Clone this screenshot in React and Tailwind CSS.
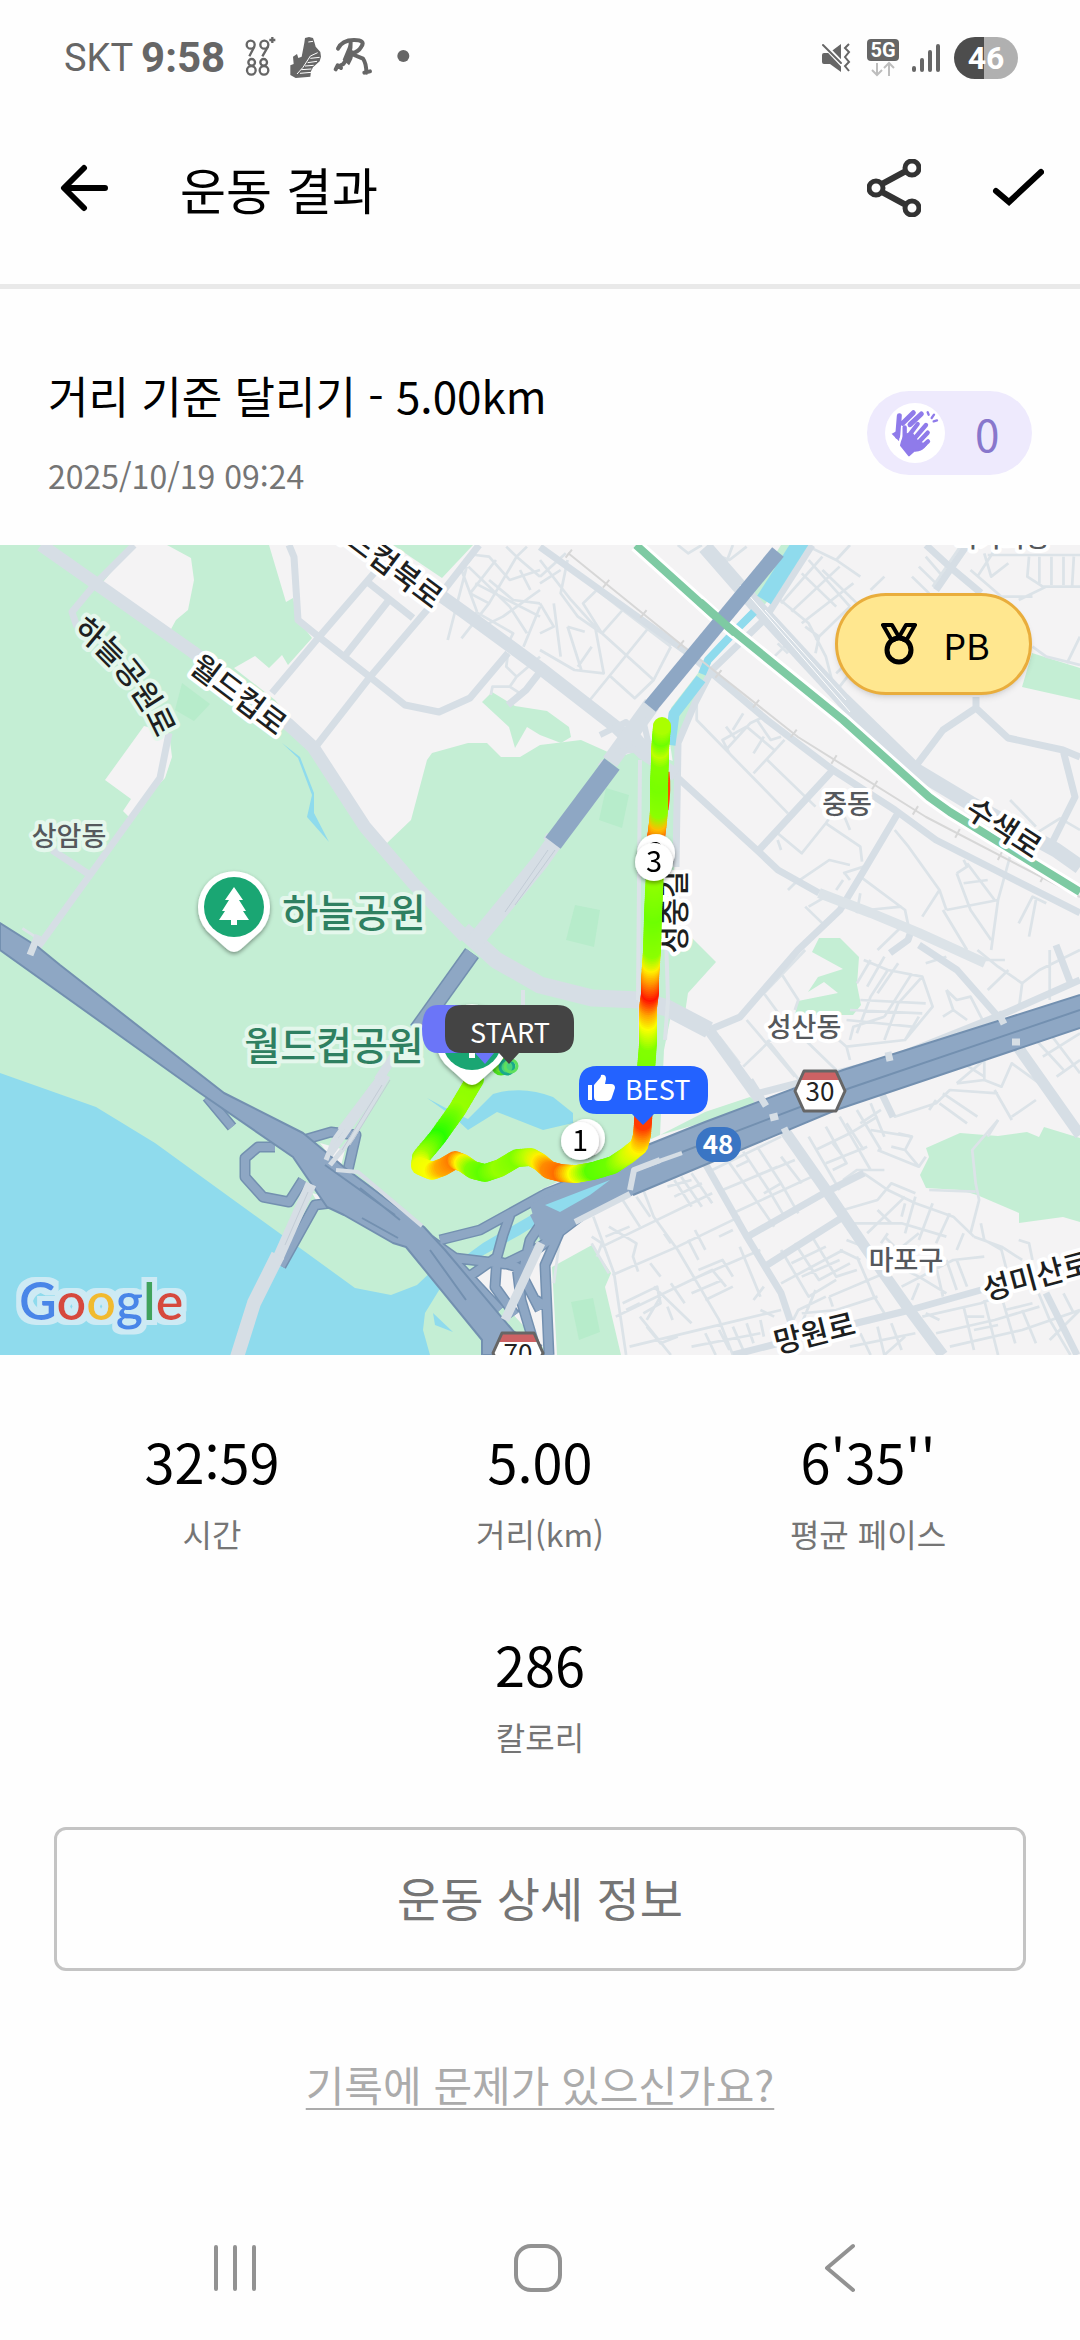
import React from 'react';

const RECORD = {
    title: '거리 기준 달리기 - 5.00km',
    date: '2025/10/19 09:24',
    claps: 0,
    stats: [
        { value: '32:59', label: '시간' },
        { value: '5.00', label: '거리(km)' },
        { value: "6'35''", label: '평균 페이스' },
        { value: '286', label: '칼로리' },
    ],
};

// Route points: x, y, colour of the pace at that point
const ROUTE = [
    [476, 1078, [110, 255, 0]], [470, 1088, [140, 255, 0]], [457, 1110, [150, 255, 0]], [437, 1138, [40, 255, 0]],
    [421, 1157, [160, 255, 0]], [420, 1166, [235, 255, 0]], [432, 1171, [250, 255, 0]], [443, 1167, [255, 170, 0]],
    [455, 1160, [255, 125, 0]], [463, 1163, [255, 245, 0]], [473, 1170, [125, 255, 0]], [485, 1173, [95, 255, 0]],
    [500, 1168, [150, 255, 0]], [517, 1158, [125, 255, 0]], [531, 1157, [190, 255, 0]], [540, 1162, [255, 240, 0]],
    [549, 1170, [255, 140, 0]], [561, 1173, [255, 110, 0]], [576, 1174, [250, 255, 0]], [593, 1171, [90, 255, 0]],
    [613, 1165, [110, 255, 0]], [628, 1155, [200, 255, 0]], [639, 1146, [255, 245, 0]], [642, 1135, [255, 170, 0]],
    [643, 1122, [255, 60, 0]], [644, 1105, [255, 60, 0]], [646, 1070, [120, 255, 0]], [648, 1043, [130, 255, 0]],
    [648, 1022, [250, 255, 0]], [648, 1008, [255, 165, 0]], [650, 993, [255, 20, 0]], [650, 980, [255, 120, 0]],
    [651, 964, [255, 240, 0]], [652, 950, [140, 255, 0]], [653, 915, [110, 255, 0]], [655, 870, [150, 255, 0]],
    [656, 838, [255, 80, 0]], [658, 822, [255, 190, 0]], [659, 810, [140, 255, 0]], [659, 785, [120, 255, 0]],
    [660, 760, [130, 255, 0]], [660, 750, [190, 255, 0]], [661, 738, [110, 255, 0]], [662, 726, [170, 255, 0]],
];

// Splits every leg of the route into dots two units apart
const routeDots = ROUTE.slice(1).flatMap(([x, y, c], i) => {
    const [px, py, pc] = ROUTE[i];
    const steps = Math.ceil(Math.hypot(x - px, y - py) / 2);
    return Array.from({ length: steps }, (_, s) => {
        const t = (s + 1) / steps;
        const mix = (a, b) => Math.round(a + (b - a) * t);
        return { x: px + (x - px) * t, y: py + (y - py) * t, fill: `rgb(${mix(pc[0], c[0])},${mix(pc[1], c[1])},${mix(pc[2], c[2])})` };
    });
});

// --- STATUS BAR ---
const StatusBar = () => (
    <div className="flex h-[100px] items-center justify-between pt-4 pr-[62px] pl-[64px] text-[#666666]">
        <div className="flex items-center gap-2 font-[Roboto] leading-none">
            <span className="text-[38px]">SKT</span>
            <span className="text-[42px] font-bold">9:58</span>
            <svg viewBox="20 0 540 180" className="ml-2 h-[60px] w-[180px]" fill="none" stroke="currentColor">
                <g strokeWidth="7">
                    <circle cx="49" cy="50" r="12" />
                    <circle cx="90" cy="50" r="12" />
                    <path d="M60 56 45 85M101 56 84 85M105 36h18M114 27v18" />
                    <circle cx="52" cy="103" r="10" />
                    <circle cx="88" cy="103" r="10" />
                    <circle cx="51" cy="127" r="13" />
                    <circle cx="89" cy="127" r="13" />
                </g>
                <path d="M168 141V112l10-4-2-22 12-8 4 12 10-4 8-42 2-14 12-3 12 3 4 12 4 14 14 16 2 14-4 14-20 18-6 12-2 16-44 4z" fill="currentColor" stroke="none" />
                <path d="M250 74l-22 10-22 34-18 20M222 42l14-2M256 88l-28 3M248 100l-28 4M238 112l-26 2M231 123l-30 2M231 133l-34 3" stroke="#fff" strokeWidth="3" />
                <path d="M311 62q12-26 48-26t22 20q-9 16-28 19M349 42q2 34-22 66l-19 10M352 78l34 14q10 14 10 42M304 124l6-12 10 8M390 134l17-4" strokeWidth="12" strokeLinejoin="round" strokeLinecap="round" />
                <path d="M345 60q14 18-2 44l-12-10z" fill="currentColor" strokeWidth="10" />
                <circle cx="507" cy="84" r="18" fill="currentColor" stroke="none" />
            </svg>
        </div>
        <div className="flex items-center">
            <svg viewBox="0 0 30 30" className="mr-4 h-[30px] w-[30px]">
                <path d="M1 12q0-2 2-2h5l12-9v28l-11-8H3q-2 0-2-2z" fill="currentColor" />
                <path d="M0-1 24 24" stroke="#fff" strokeWidth="5" />
                <path d="M2 2 20 20" stroke="currentColor" strokeWidth="2" strokeLinecap="round" />
                <path d="M28 1l-4 4 4 4-4 5 4 5-4 4 4 5" fill="none" stroke="currentColor" strokeWidth="2" />
            </svg>
            <svg viewBox="0 0 32 38" className="mr-[13px] h-[38px] w-[32px]">
                <rect width="32" height="22" rx="4" fill="currentColor" />
                <text x="16" y="18" textAnchor="middle" className="fill-white font-[Roboto] text-[20px] font-bold">5G</text>
                <path d="M10 24v12M5 31l5 5 5-5M22 37V24M17 29l5-5 5 5" fill="none" stroke="#bdbdbd" strokeWidth="2" />
            </svg>
            <svg viewBox="0 0 28 30" className="mr-[14px] h-[30px] w-[28px]" stroke="currentColor" strokeWidth="4" strokeLinecap="round">
                <path d="M2 25v2M10 17v10M18 9v18M26 3v24" />
            </svg>
            <span className="flex h-[42px] w-[64px] items-center justify-center rounded-full bg-linear-to-r from-[#4d4d4d] from-[47%] to-[#b0b0b0] to-[47%] font-[Roboto] text-[32px] leading-none font-bold text-white">46</span>
        </div>
    </div>
);

// --- HEADER ---
const Header = () => (
    <header className="flex h-[189px] items-center border-b-[5px] border-[#e9e9e9] pr-[36px] pb-2 pl-[60px]">
        <button aria-label="뒤로">
            <svg viewBox="0 0 48 48" className="size-[48px]" fill="none" stroke="#000" strokeWidth="6" strokeLinecap="round" strokeLinejoin="round">
                <path d="M45 24H5M24 4 4 24l20 20" />
            </svg>
        </button>
        <h1 className="ml-[72px] flex-1 text-[50px] leading-[72px]">운동 결과</h1>
        <button aria-label="공유">
            <svg viewBox="0 0 54 58" className="h-[58px] w-[54px]" fill="none" stroke="#333" strokeWidth="5">
                <circle cx="9" cy="29" r="7" />
                <circle cx="45" cy="9" r="7" />
                <circle cx="45" cy="49" r="7" />
                <path d="M15 25 39 12M15 33l24 13" strokeWidth="6" />
            </svg>
        </button>
        <button aria-label="완료" className="ml-[71px]">
            <svg viewBox="0 0 52 40" className="h-[40px] w-[52px]" fill="none" stroke="#000" strokeWidth="6" strokeLinecap="round">
                <path d="M4 23 17 34 49 4" />
            </svg>
        </button>
    </header>
);

const ClapIcon = () => (
    <svg viewBox="255 125 180 180" className="size-[60px]" stroke="#8f7bea" fill="none" strokeLinecap="round">
        <path d="M298 163l-5 62M340 154l-32 32M364 158l-34 32" strokeWidth="15" />
        <path d="M278 218l18-10v28z" fill="#8f7bea" strokeWidth="4" />
        <path d="M314 196l-14 48 27 38 24-14q28-6 36-30l-44-24-28-8z" fill="#fff" stroke="#fff" strokeWidth="8" />
        <path d="M314 198v42M353 188l-26 34M378 191l-36 42M383 214l-32 34M384 240l-22 20" strokeWidth="13" />
        <path d="M306 240l8-20 22-4 18 26 24 8q-14 20-36 18l-15 14-24-30z" fill="#8f7bea" strokeWidth="6" strokeLinejoin="round" />
        <path d="M383 153l3 7M402 160l-7 10M401 180l10-3" strokeWidth="7" />
    </svg>
);

// --- MAP ---
const MapLabel = ({ x, y, angle = 0, className = 'fill-[#1d1f21] text-[30px]', halo = '#ffffff', children }) => (
    <text
        transform={`translate(${x} ${y}) rotate(${angle})`}
        textAnchor="middle"
        dominantBaseline="central"
        stroke={halo}
        strokeWidth="8"
        strokeLinejoin="round"
        paintOrder="stroke"
        className={`font-medium ${className}`}
    >
        {children}
    </text>
);

const ParkPin = ({ x, y }) => (
    <g transform={`translate(${x} ${y})`}>
        <path d="M-27 24A36 36 0 1 1 27 24L7 42Q0 48-7 42Z" fill="#fff" filter="url(#pinShadow)" />
        <circle r="30" fill="#1aa673" />
        <path d="M0-20l9 13H5l7 11H9l6 9H3v5h-6v-5h-12l6-9h-3l7-11h-4z" fill="#fff" />
    </g>
);

const KmMarker = ({ x, y, children }) => (
    <g filter="url(#pinShadow)">
        <circle cx={x} cy={y} r="19" fill="#fff" />
        <text x={x} y={y + 10} textAnchor="middle" className="fill-black text-[29px]">{children}</text>
    </g>
);

const RoadShield = ({ x, y, children }) => (
    <g transform={`translate(${x} ${y})`}>
        <path d="M-16-20h32l9 20-9 20h-32l-9-20z" fill="#fff" />
        <path d="M-16-20h32l4 9h-40z" fill="#cd6264" />
        <path d="M-16-20h32l9 20-9 20h-32l-9-20z" fill="none" stroke="#666" strokeWidth="3" strokeLinejoin="round" />
        <text y="10" textAnchor="middle" className="fill-[#222] text-[26px]">{children}</text>
    </g>
);

const MapLand = () => (
    <g>
        <rect y="545" width="1080" height="810" fill="#f4f3f4" />
        <g fill="#c4eed4">
            <path d="M0 545H269L286 602 293 598 298 620 312 638 288 665 282 655 269 668 255 656 234 668 275 700 315 747 365 827 387 843 411 820 427 760 432 753 468 743H487L501 757H520L540 745 581 740 619 757 640 750 676 762 672 1010 664 1050 660 1135 540 1190 570 1220 500 1300 550 1355H0Z" />
            <path d="M393 545H473L442 578Z" />
            <path d="M482 702 492 692 515 706 547 711 569 727 571 737 561 743 540 735 527 727 515 748 509 727Z" />
            <path d="M781 545H812L762 608 753 590Z" />
            <path d="M671 708 702 668 711 672 684 725 674 770 668 730Z" />
            <path d="M1032 653 1080 668V700L1022 687Z" />
            <path d="M671 950 691 937 716 962 688 993 685 1013 671 1010Z" />
            <path d="M660 1135 705 1112 750 1097 757 1102 740 1112Z" />
            <path d="M819 938H840L859 957 857 985 861 1005 853 1015H795L798 1001 838 993 824 982 808 992 818 977 843 969 812 952Z" />
            <path d="M960 1133 998 1136 1027 1132 1039 1137 1044 1127 1080 1138V1222L1063 1217 1019 1223V1213L977 1195 960 1190 926 1188 920 1175 929 1157 926 1148Z" />
            <path d="M552 1267 592 1245 611 1273 605 1287 621 1355H557Z" />
        </g>
        <g fill="#b7eccb">
            <path d="M182 683 210 704 194 721 175 710Z" />
            <path d="M606 788 629 795 622 828 599 820Z" />
            <path d="M575 905 600 910 594 947 566 940Z" />
            <path d="M571 1302 593 1298 600 1332 579 1340Z" />
        </g>
        {/* Land showing through the park */}
        <g fill="#f4f3f4">
            <path d="M134 545H167L191 558 194 580 188 610 176 620 170 631 103 582Z" />
            <path d="M144 726 169 733 172 757 165 778 129 817 123 811 131 799 105 780Z" />
        </g>
        <g fill="#8fdbed">
            <path d="M0 1073 96 1107 155 1143 282 1235 355 1288 391 1295 417 1285 435 1268 441 1287 425 1313 423 1330 430 1355H0Z" />
            <path d="M427 1098 455 1113 468 1119 493 1094Q523 1085 553 1097L573 1113V1123L543 1130 497 1112 468 1130 455 1118Z" />
            <path d="M282 743 300 757 314 793V813L329 842 307 817 312 795 298 758Z" />
            <path d="M457 1262 483 1243 540 1210 593 1180H614L557 1212 520 1235 480 1257 457 1268Z" />
            <path d="M433 1313 453 1332 435 1325Z" />
        </g>
    </g>
);

const MapStreets = () => (
    <g fill="none" stroke="#dce3e8" strokeLinejoin="round">
        {/* Side streets, one sheet per quarter of the map */}
        <g transform="translate(0 540) scale(.3444 .3333)" strokeWidth="8">
            <path d="M1380 40 1340 90 1385 215M1355 80 1300 300M1360 80 1480 200 1530 280M1380 130 1568 230M1440 60 1365 160 1420 190M1500 50 1420 190 1340 295M1568 90 1480 120 1420 50 1380 45M1568 150 1460 230 1400 260M1530 20 1500 50 1470 20M1420 120 1490 180 1568 190M1568 200 1520 320M1500 50 1568 110M1380 215 1490 280 1480 300M1475 340 1470 380 1500 410 1480 440 1430 440 1425 465M1500 410 1568 350M1480 440 1510 460M65 1165 110 1195M1510 90 1540 150" />
        </g>
        <g transform="translate(540 540) scale(.3444 .3333)" strokeWidth="8">
            <path d="M75 40 0 110M80 60 60 160 110 230 180 280 330 420M165 150 240 210 380 320M165 150 125 190 180 280 240 210M310 270 145 480M380 320 330 420 275 475 200 405M0 60 90 180 160 260 185 400 100 390 0 330M40 190 60 350M80 260 120 390M0 190 40 260 0 280M0 130 60 90M80 260 130 275M110 380 150 320" />
            <path d="M680 165 780 250 830 350 850 430M700 190 820 50M730 215 870 80M760 250 910 130M780 60 900 200M820 90 960 230M760 100 860 200M800 300 900 200M770 260 810 290 800 340M860 400 890 370M870 440 900 400M900 15 860 60 780 20M860 60 930 110M960 150 1000 110" />
            <path d="M1080 110 1130 160M1100 80 1150 130M1120 50 1170 110M1140 140 1220 20M1250 90 1340 170 1430 170M1270 110 1320 30M1290 40 1310 110 1360 70M1300 45H1568M1420 50 1415 110 1460 140H1568M1450 50V130M1485 50V135M1520 50V135M1550 50 1545 140M1390 180 1470 140M400 15 430 40 470 15M500 40 550 60 600 20M540 70 560 15M1430 320 1470 350 1568 375M1530 370 1568 290" />
            <path d="M455 480V540L720 820M540 630 610 550 650 530M620 700 710 600M550 640 530 600 600 560 680 630M650 590 620 640M630 540 670 600 700 590M660 660 800 800M590 520 560 570M540 560 570 600M690 310 720 340M740 350 760 370M680 350 710 320" />
            <path d="M690 880 760 940 830 850 930 920 935 965M720 1050 740 1030 840 960 900 975M830 850 850 820M880 820 900 870M880 1000 940 980M885 1000 900 1020M1030 870 1070 920 1160 1050 1180 1110M930 1010 1060 1110 1070 1160M1180 1110 1330 1080 1370 930M1210 1000 1240 980 1230 960M1210 1000 1250 1110 1310 1200M1300 1020 1230 1030M1240 970 1320 1080M1420 1190 1440 1080M1390 1150 1430 1070 1470 1090M1160 1050 1110 1130M1170 1110 1240 1230M1440 880 1510 835 1568 870M1365 780 1440 860M780 1100 830 1070M770 1100 830 1160M930 1060 920 1120M950 1110 1050 1100M860 1050 880 1020M1060 1150 980 1230M1330 1080 1310 1230M690 900 700 930" />
        </g>
        <g transform="translate(540 950) scale(.3444 .3333)" strokeWidth="8">
            <path d="M155 800 215 970 250 1215M300 720 330 800 400 900 520 1110 560 1215M240 750 290 830M280 740 320 800M150 860 180 880 165 920M200 830 280 880 270 920 285 965M190 860 260 830M180 890 330 815 500 730M210 975 400 890 580 800M220 1100 450 985 640 900M260 1190 500 1130 700 1080M390 690 440 770M410 680 470 770M440 670 500 760M370 710 440 690M390 740 470 700M360 850 380 880M450 840 480 900M430 870 460 930M320 940 350 980M250 1080 290 1060M240 1060 340 1010 350 1060 300 1090M330 1010 440 1120M380 1000 420 1060M350 1040 310 1110M290 1100 380 1215M420 1000 500 960 540 1010M440 1030 530 990M460 960 530 930 560 980M480 1050 560 1010M310 1130 350 1180 400 1160M370 1070 385 1110M560 840 520 860M200 970 150 880M440 1190 640 1150M480 1150 510 1215M520 1140 550 1200M560 1130 590 1200M600 1120 620 1180M640 1110 650 1160" />
            <path d="M500 660 640 590 700 560M530 720 740 630M560 790 790 680M540 625 620 740 680 830M590 605 670 730 710 800M630 590 700 700 750 790M570 650 610 630M600 690 690 650M650 730 700 700M700 620 760 700M580 890 640 1040M650 1010 620 1050M640 1080 680 1100" />
            <path d="M780 560 870 720M830 530 890 640 850 660M870 500 960 660M920 480 990 600M800 600 900 550 980 500M830 640 950 590M960 540 1080 560 1060 600 1020 590M980 600 1100 650 1120 620M1060 600 1100 650M850 580 880 620M880 690 920 660 1000 660M940 670 1010 720 1090 760 1200 800 1260 860M880 780 980 750 1020 700 1090 730M900 820 1050 820 1180 860M950 850 1060 740M1000 860 1040 900 1100 850M1090 740 1060 850M1140 760 1100 870M1190 790 1150 880M980 780 1020 820M1050 800 1060 760M1230 850 1210 900M1260 860 1340 890 1400 930M1280 820 1290 870 1340 900 1360 980M1390 870 1420 880 1430 930M1010 850 990 880" />
            <path d="M700 900 780 1040 860 990M740 880 810 990 900 940M790 860 860 980 920 960M700 1000 880 900M730 940 830 890M760 980 870 930M800 1020 760 1120M840 1040 850 1070M840 1040 1000 970M760 1090 860 1080 980 1040M730 1120 750 1080 830 1040M920 920 970 1040 1000 1090M870 900 930 930M890 870 940 890M1050 1010 1200 930 1290 920M1080 1050 1100 1000M1150 950 1170 1040M1180 930 1210 1020M1210 930 1240 1010M1100 980 1180 1030M1060 960 1100 980" />
            <path d="M1110 1100 1280 1060 1380 1020M1150 1150 1320 1110 1450 1070M1190 1190 1400 1140 1568 1080M1230 1070 1260 1200M1290 1050 1330 1215M1340 1040 1380 1180M1400 1080 1440 1180M1440 1010 1480 1110 1540 1215M1240 1100H1290M1260 1140 1330 1125M1350 1080 1430 1060M1480 1170 1568 1080M1520 1030 1550 1090M980 1130 1000 1215M1020 1120 1050 1200M930 1150 960 1215M900 1190 1090 1150M1160 1110 1120 1090M1000 1215 1060 1160" />
            <path d="M650 130 770 0M700 70 750 150 740 180M650 130 700 200M590 350 700 240M600 210 740 380M580 340 520 260M660 270 760 400M770 270 860 360M900 330 890 290 790 200M890 290 1060 270 1100 200M890 210 1080 230M900 180 1110 190M900 270 910 230 1000 200M920 100 960 30M950 110 1000 20M980 130 1040 40M1010 60 1110 80 1120 110M940 30 1010 60 960 140 920 250M1110 80 1040 160 1000 270M1080 70 1000 200M930 150 1120 160M1120 110 1140 170 1060 270M1180 120 1210 150 1250 140 1300 240M1180 120 1200 180 1240 210M1120 40 1180 20M1270 0 1330 50 1400 100 1390 180M1400 100 1450 60 1568 0M1480 0 1480 150M1250 30 1350 30M1300 120 1360 60M1170 200 1200 180" />
            <path d="M990 430 1030 500 1150 460 1190 420 1330 430M1170 430 1270 500M1160 460 1240 520M1210 400 1290 330 1290 390 1210 400M1290 390 1340 410 1370 340 1450 400M1330 510 1300 560M1370 510 1320 420M1440 450 1370 500M1440 270 1520 360M1480 250 1568 370M1460 320 1568 250M1500 380 1568 330M1230 340 1290 380M1040 550 1080 560M930 520 990 480M960 460 1000 560M890 520 940 600M1130 480 1150 450" />
            <path d="M1330 510 1255 600 1265 700 1275 750 1250 850M1130 720 1265 725" />
            <path d="M60 850 40 1000" />
        </g>
        {/* Streets */}
        <g strokeWidth="7" stroke="#d6dee5">
            <path d="M134 545 96 583 72 612 77 627M169 733 160 778 90 875 38 947M52 850 90 875M289 545 294 557 298 620 319 637 370 677 405 705 439 712 470 698 508 653M375 572 319 637 272 693M365 580 413 618M389 600 344 657M479 545 444 590 370 677 317 745M508 705 526 690 540 672" />
            <path d="M540 547 688 653 767 720 833 770 895 810 936 840 1080 913M926 545 950 567 981 593M967 545 936 590M976 697V708L943 730 915 767M976 708 1008 738 1063 750 1080 757M1063 750 1075 797 1050 847M898 813 860 877 840 910 798 950 740 1017 709 1030M833 770 759 850M678 778 759 852 778 870 819 893" />
            <path d="M812 545 764 620 712 670 695 703 678 743 676 867M733 1355 857 1323 910 1310 981 1290M705 1163 747 1237 781 1293 791 1323M747 1237 826 1192 864 1173M764 1267 843 1217M760 1093 888 1060 1008 1012 1080 980M919 945 957 970 1001 1020M1056 945 1072 987M1046 1293 1077 1355M881 1092 893 1117M912 928 908 940 890 953" />
        </g>
        <path d="M819 893 871 913 919 933 985 963" strokeWidth="10" />
        <path d="M437 593 465 613 540 668 616 727 643 753 676 775" strokeWidth="13" stroke="#d6dee5" />
        <path d="M705 547 760 610 843 700 915 770 970 803 1056 850 1080 867" strokeWidth="15" stroke="#d6dee5" />
        <path d="M740 585 850 712M765 610 846 700" stroke="#fff" strokeWidth="1" />
        <path d="M784 1130 826 1190 867 1250 908 1308 943 1355M1015 1043 1080 1135M709 1030 764 1106" strokeWidth="11" stroke="#d6dee5" />
        <path d="M41 545 98 585 193 652 289 725 313 747 365 827 413 883 465 937" strokeWidth="13" stroke="#d6dee5" />
        <path d="M463 930 496 960 540 985 592 998 640 1000 667 1008 709 1030" strokeWidth="17" stroke="#d6dee5" />
        <path d="M640 760 638 1000M668 1000 665 1040M640 1000 640 1060M523 990V1005M664 870 668 1000" strokeWidth="4" />
        {/* Stream beside the expressway */}
        <g stroke="#8fdbed">
            <path d="M802 540 764 600" strokeWidth="16" />
            <path d="M754 612 740 626 708 660 702 674" strokeWidth="8" />
            <path d="M701 679 674 714 670 745" strokeWidth="11" />
        </g>
        {/* Railways */}
        <path d="M568 553 688 650 798 737 926 817 1080 897" stroke="#d7d7d7" strokeWidth="2" />
        <path d="M568 553 688 650 798 737 926 817 1080 897" stroke="#d7d7d7" strokeWidth="10" strokeDasharray="2 46" />
        <path d="M636 545 716 617 843 720 929 797 950 812 1080 892" stroke="#fff" strokeWidth="14" />
        <path d="M636 545 716 617 843 720 929 797 950 812 1080 892" stroke="#7ecaa3" strokeWidth="8" />
        {/* Street edges of the tunnel */}
        <path d="M652 704 610 762M557 838 540 862 472 945" stroke="#d6dee5" strokeWidth="17" />
        <path d="M642 715 650 750 626 722 600 735M615 752 650 748" stroke="#d6dee5" strokeWidth="6" />
        <path d="M600 762 612 771M545 836 562 845" stroke="#d6dee5" strokeWidth="7" />
        <path d="M555 850 515 905M548 850 505 912" stroke="#c2ccd6" strokeWidth="1" />
    </g>
);

const RAMPS = 'M275 1147H258L245 1158V1177L263 1197 289 1202 303 1180M300 1141 331 1132 356 1135 348 1170M331 1203 315 1205 281 1266M207 1097 232 1127M636 1158 547 1193 480 1230 440 1240M640 1186 595 1205 540 1247 505 1264 455 1258 430 1240M577 1180 557 1200 530 1240 522 1275 540 1310M510 1215 503 1235 497 1257 470 1276M600 1195 567 1215 545 1265 549 1355M497 1257 495 1287 515 1315M500 1262 517 1267 521 1300 536 1350M425 1237 500 1330 540 1350M455 1262 500 1310M536 1300 545 1306';

const MapHighways = () => (
    <g fill="none" strokeLinejoin="round">
        <path d="M510 1262 520 1275 500 1310 470 1275ZM540 1250 536 1298 520 1280ZM320 1143 345 1150 340 1170ZM312 1193 330 1198 318 1203Z" fill="#f4f3f4" />
        <path d={RAMPS} stroke="#7390b0" strokeWidth="11" />
        <path d={RAMPS} stroke="#8ea7c4" strokeWidth="8" />
        <path d="M0 923 38 947 60 965 224 1093 303 1133 345 1168 424 1227 445 1250 525 1345V1355H482V1340L406 1247 393 1243 344 1215 327 1207 293 1157 200 1093 0 950Z" fill="#8ea7c4" stroke="#7390b0" strokeWidth="2" />
        <path d="M1080 995 843 1070 705 1122 640 1148 570 1183 530 1205 540 1240 560 1232 633 1195 836 1110 1080 1028Z" fill="#8ea7c4" />
        <path d="M1080 995 843 1070 705 1122 640 1148M633 1195 836 1110 1080 1028M1080 1010 850 1088 640 1168M360 1188 400 1220M362 1218 398 1238M430 1250 466 1300M325 1165 395 1215" stroke="#7390b0" strokeWidth="2" />
        <path d="M570 1195 530 1215 545 1245 575 1215Z" fill="#8ea7c4" />
        <path d="M545 1205 610 1180 590 1195 560 1212Z" fill="#8fdbed" />
        <path d="M778 552 650 707" stroke="#8ea7c4" strokeWidth="15" />
        <path d="M612 764 553 843" stroke="#8ea7c4" strokeWidth="19" />
        <path d="M472 953 417 1030" stroke="#7390b0" strokeWidth="17" />
        <path d="M472 953 417 1030" stroke="#8ea7c4" strokeWidth="14" />
        {/* The railway passes over the expressway */}
        <path d="M700 602 735 633" stroke="#7ecaa3" strokeWidth="8" />
        {/* Bridges over the highways */}
        <g stroke="#d6dee5">
            <path d="M410 1032 378 1080" strokeWidth="9" />
            <path d="M380 1076 334 1140 326 1160M388 1076 352 1138 330 1165" strokeWidth="5" />
            <path d="M384 1078 330 1155M374 1085 340 1130" strokeWidth="6" />
            <path d="M311 1184 278 1258" strokeWidth="11" />
            <path d="M278 1255 254 1303 237 1357" strokeWidth="14" />
            <path d="M336 1170 358 1172 422 1226" strokeWidth="4" />
            <path d="M541 1243 505 1320" strokeWidth="9" />
            <path d="M660 1160 634 1170 630 1190M630 1194 575 1222" strokeWidth="6" />
            <path d="M682 1153 634 1170" strokeWidth="4" />
            <path d="M750 1080 766 1106M784 1128 788 1136M888 1052 890 1061M770 1118 778 1116M998 1012 1004 1024M1012 1042 1020 1042M38 935 30 955" strokeWidth="7" />
        </g>
        <path d="M382 1085 342 1150M390 1080 350 1145M308 1192 285 1245" stroke="#c3ccd6" strokeWidth="1" />
    </g>
);

const RunMap = () => (
    <div className="relative">
        <svg viewBox="0 545 1080 810" className="block w-full" role="img" aria-label="달리기 경로">
            <defs>
                <filter id="pinShadow" x="-30%" y="-30%" width="160%" height="170%">
                    <feDropShadow dx="0" dy="2" stdDeviation="2" floodOpacity="0.4" />
                </filter>
                <filter id="logoHalo" x="-10%" y="-20%" width="120%" height="140%">
                    <feMorphology in="SourceAlpha" operator="dilate" radius="5" result="grown" />
                    <feFlood floodColor="#cdeaf4" />
                    <feComposite in2="grown" operator="in" result="halo" />
                    <feMerge>
                        <feMergeNode in="halo" />
                        <feMergeNode in="SourceGraphic" />
                    </feMerge>
                </filter>
                <path id="haneulRoad" d="M72 632Q136 680 162 752" />
            </defs>
            <MapLand />
            <MapStreets />
            <MapHighways />

            <MapLabel x={385} y={558} angle={37}>월드컵북로</MapLabel>
            <MapLabel x={240} y={693} angle={37}>월드컵로</MapLabel>
            <text className="fill-[#1d1f21] text-[30px] font-medium" stroke="#e4f7ec" strokeWidth="8" strokeLinejoin="round" paintOrder="stroke">
                <textPath href="#haneulRoad">하늘공원로</textPath>
            </text>
            <MapLabel x={1005} y={826} angle={33}>수색로</MapLabel>
            <MapLabel x={672} y={912} angle={-90}>성중길</MapLabel>
            <MapLabel x={814} y={1331} angle={-14}>망원로</MapLabel>
            <MapLabel x={1036} y={1274} angle={-15}>성미산로</MapLabel>
            <MapLabel x={1002} y={535} className="fill-[#55585c] text-[26px]">북가좌동</MapLabel>
            <MapLabel x={69} y={834} className="fill-[#55585c] text-[27px]" halo="#e4f7ec">상암동</MapLabel>
            <MapLabel x={847} y={802} className="fill-[#55585c] text-[27px]">중동</MapLabel>
            <MapLabel x={804} y={1025} className="fill-[#55585c] text-[27px]">성산동</MapLabel>
            <MapLabel x={906} y={1258} className="fill-[#55585c] text-[27px]">마포구</MapLabel>
            <MapLabel x={354} y={910} className="fill-[#2f8061] text-[39px]" halo="#e4f7ec">하늘공원</MapLabel>
            <MapLabel x={334} y={1043} className="fill-[#2f8061] text-[39px]" halo="#e4f7ec">월드컵공원</MapLabel>

            <RoadShield x={820} y={1091}>30</RoadShield>
            <RoadShield x={518} y={1353}>70</RoadShield>
            <rect x="696" y="1127" width="45" height="35" rx="17" fill="#3a75c4" />
            <text x="718" y="1154" textAnchor="middle" className="fill-white text-[26px] font-bold">48</text>

            <g fill="none" strokeWidth="3">
                <circle cx="501" cy="1066" r="8" fill="#6be02e" stroke="#4be01e" />
                <circle cx="507" cy="1067" r="7" fill="#48d27c" stroke="#1aa98c" />
                <circle cx="511" cy="1066" r="6" stroke="#5ee05e" />
            </g>
            <path d="M668 772Q670 790 667 810" fill="none" stroke="#ff4a00" strokeWidth="3" />
            {routeDots.map((dot, i) => (
                <circle key={i} cx={dot.x} cy={dot.y} r="9" fill={dot.fill} />
            ))}
            <ParkPin x={234} y={907} />
            <ParkPin x={472} y={1040} />

            <KmMarker x={656} y={853}>2</KmMarker>
            <KmMarker x={654} y={862}>3</KmMarker>
            <KmMarker x={586} y={1138} />
            <KmMarker x={580} y={1141}>1</KmMarker>

            <path d="M438 1005h90v48h-34l-9 11-10-11h-37q-16 0-16-24t16-24z" fill="#6b75f8" />
            <path d="M462 1005h95q17 0 17 17v14q0 17-17 17h-38l-10 11-10-11h-37q-17 0-17-17v-14q0-17 17-17z" fill="#444" />
            <text x="510" y="1043" textAnchor="middle" className="fill-white text-[27px]">START</text>

            <path d="M597 1066h93q18 0 18 18v12q0 18-18 18h-36l-11 11-11-11h-35q-18 0-18-18v-12q0-18 18-18z" fill="#2362ff" />
            <path d="M588 1085h4v15h-4zM594 1085l6-7q1-1 1-3 5-1 5 4l-1 5h6q4 0 4 4l-3 9q-1 4-5 4h-9q-4 0-4-4z" fill="#fff" />
            <text x="625" y="1100" className="fill-white text-[27px]">BEST</text>

            {/* Map provider logo */}
            <text x="19" y="1320" filter="url(#logoHalo)" className="font-[Lato] text-[52px] font-semibold">
                <tspan fill="#4a86e8">G</tspan>
                <tspan fill="#d64a3e">o</tspan>
                <tspan fill="#f0bb2e">o</tspan>
                <tspan fill="#4a86e8">g</tspan>
                <tspan fill="#3fa35c">l</tspan>
                <tspan fill="#d64a3e">e</tspan>
            </text>
        </svg>

        <div className="absolute top-12 right-12 flex h-[102px] w-[197px] items-center justify-center gap-[26px] rounded-full border-[3px] border-[#e9ad3c] bg-[#ffe78f] pl-1 shadow-md">
            <svg viewBox="0 0 36 42" className="h-[42px] w-[36px]" fill="none" stroke="#000" strokeWidth="4" strokeLinejoin="round">
                <circle cx="18" cy="27" r="12" strokeWidth="5" />
                <path d="M2 2h9l7 12-5 3-3-1zM34 2h-9l-7 12 5 3 3-1z" />
            </svg>
            <span className="text-[36px] leading-[48px]">PB</span>
        </div>
    </div>
);

const Stat = ({ value, label }) => (
    <div className="flex flex-col items-center">
        <dd className="text-[54px] leading-[72px]">{value}</dd>
        <dt className="order-last text-[32px] leading-[72px] text-[#757575]">{label}</dt>
    </div>
);

const NavBar = () => (
    <nav className="mt-auto flex items-center justify-between px-[210px] pb-[46px]">
        <button aria-label="최근 앱">
            <svg viewBox="0 0 50 52" className="h-[52px] w-[50px]" stroke="#929292" strokeWidth="4" strokeLinecap="round">
                <path d="M6 5v42M25 5v42M44 5v42" />
            </svg>
        </button>
        <button aria-label="홈">
            <svg viewBox="0 0 52 52" className="size-[52px]" fill="none" stroke="#929292" strokeWidth="4">
                <rect x="2" y="4" width="44" height="44" rx="15" />
            </svg>
        </button>
        <button aria-label="뒤로 가기">
            <svg viewBox="0 0 50 52" className="h-[52px] w-[50px]" fill="none" stroke="#929292" strokeWidth="4" strokeLinecap="round" strokeLinejoin="round">
                <path d="M33 4 7 26l26 22" />
            </svg>
        </button>
    </nav>
);

export default function App() {
    return (
        <div lang="ko" className="flex min-h-screen flex-col bg-[#fefefe] font-['Noto_Sans_CJK_KR','Noto_Sans',sans-serif] text-black">
            <StatusBar />
            <Header />

            <main>
                <section className="flex items-center justify-between px-12 pt-[72px] pb-[40px]">
                    <div>
                        <h2 className="text-[44px] leading-[68px]">{RECORD.title}</h2>
                        <p className="mt-4 text-[32px] leading-[60px] text-[#757575]">{RECORD.date}</p>
                    </div>
                    <button className="flex h-[84px] w-[165px] items-center rounded-full bg-[#eeeafd] pl-[18px] text-[#8877cc]" aria-label="박수">
                        <span className="rounded-full bg-white">
                            <ClapIcon />
                        </span>
                        <span className="ml-[30px] text-[44px] leading-[60px]">{RECORD.claps}</span>
                    </button>
                </section>

                <RunMap />

                <dl className="px-[48px] pt-[70px]">
                    <div className="grid grid-cols-3">
                        {RECORD.stats.slice(0, 3).map((stat) => (
                            <Stat key={stat.label} {...stat} />
                        ))}
                    </div>
                    <div className="mt-[59px]">
                        <Stat {...RECORD.stats[3]} />
                    </div>
                </dl>

                <div className="px-[54px] pt-[55px]">
                    <button className="h-[144px] w-full rounded-xl border-[3px] border-[#c4c4c4] pb-[3px] text-[47px] text-[#757575]">운동 상세 정보</button>
                </div>
                <div className="mt-[80px] text-center">
                    <a href="#report" className="text-[42px] leading-[66px] text-[#ababab] underline decoration-2 underline-offset-[6px]">기록에 문제가 있으신가요?</a>
                </div>
            </main>

            <NavBar />
        </div>
    );
}
